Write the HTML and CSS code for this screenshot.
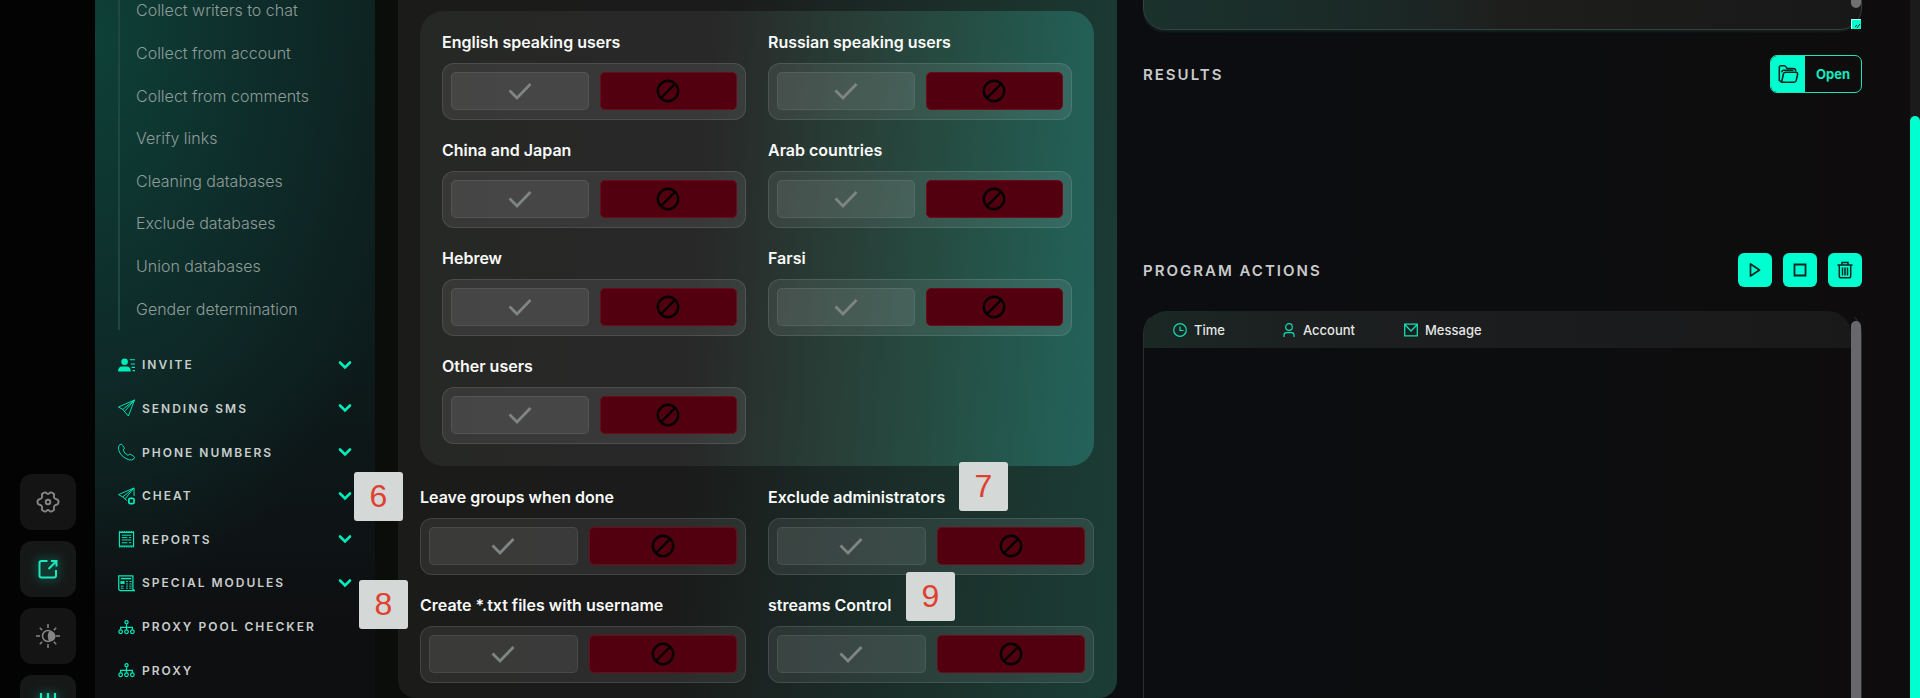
FILE: index.html
```html
<!DOCTYPE html>
<html lang="en">
<head>
<meta charset="utf-8">
<title>Collect</title>
<link rel="stylesheet" href="styles.css">
</head>
<body>
<svg class="defs" aria-hidden="true">
  <symbol id="check" viewBox="0 0 24 24"><path d="M1.500 11.500 9 19 22.500 5" fill="none" stroke="currentColor" stroke-width="2.800"/></symbol>
  <symbol id="ban" viewBox="0 0 24 24"><circle cx="12" cy="12" r="10.200" fill="none" stroke="currentColor" stroke-width="2.400"/><path d="M5 19 19 5" stroke="currentColor" stroke-width="2.400"/></symbol>
  <symbol id="chev" viewBox="0 0 14 14"><path d="M2 4.500 7 9.500 12 4.500" fill="none" stroke="currentColor" stroke-width="2.600" stroke-linecap="round"/></symbol>
  <symbol id="tree" viewBox="0 0 18 18"><g fill="none" stroke="currentColor" stroke-width="1.300"><circle cx="9" cy="4" r="1.700"/><circle cx="2.800" cy="14" r="1.900"/><circle cx="9" cy="14" r="1.900"/><circle cx="15.200" cy="14" r="1.900"/><path d="M9 6v6M2.800 12V9.500h12.400V12"/></g></symbol>
</svg>
<div class="app">
  <aside class="rail">
    <button class="tool" aria-label="Settings"><svg viewBox="0 0 24 24"><g fill="none" stroke="currentColor" stroke-width="1.900" stroke-linejoin="round"><path d="M9.300 2.600Q10 2.300 10.500 3.200 12 4.800 13.500 3.200 14 2.200 15.500 2.500L17.500 3.600Q18.500 4.300 18 5.500C17.600 7.500 18.500 8.900 20.500 9.200Q22.500 9.600 22.500 12T20.500 14.800C18.500 15.100 17.600 16.500 18 18.500Q18.500 19.700 17.500 20.400L15.500 21.500C14.500 21.800 14 21.500 13.500 20.800Q12 19.200 10.500 20.800C10 21.500 9.500 21.800 8.500 21.500L6.500 20.400Q5.500 19.700 6 18.500C6.400 16.500 5.500 15.100 3.500 14.800Q1.500 14.400 1.500 12T3.500 9.200C5.500 8.900 6.400 7.500 6 5.500Q5.500 4.300 6.500 3.600L8.500 2.500Z"/><circle cx="12" cy="12" r="2.300"/></g></svg></button>
    <button class="tool on" aria-label="Export"><svg viewBox="0 0 24 24"><path d="M11.500 4H5.500Q3.500 4 3.500 6V18.500Q3.500 20.500 5.500 20.500H18Q20 20.500 20 18.500V13M15 4h5.500v5.500M20 4.500 12.500 12" fill="none" stroke="currentColor" stroke-width="2"/></svg></button>
    <button class="tool" aria-label="Brightness"><svg viewBox="0 0 24 24"><g fill="none" stroke="currentColor" stroke-width="1.500"><circle cx="12" cy="12" r="5.500"/><path d="M12 0v4M12 20v4M0 12h4M20 12h4M3.800 3.800l2.400 2.400M17.800 17.800l2.400 2.400M3.800 20.200l2.400-2.400M17.800 6.200l2.400-2.400"/></g><path d="M13 7.500a5 5 0 1 1 0 9.500Q10.500 12 13 7.500z" fill="currentColor"/></svg></button>
    <button class="tool on" aria-label="Filters"><svg viewBox="0 0 24 24"><path d="M5 2v20M19 2v20M12 2v5M12 7Q8 10 8 16M12 7Q16 10 16 16" fill="none" stroke="currentColor" stroke-width="2.200"/></svg></button>
  </aside>

  <nav class="side">
    <div class="sub">
      <a href="#">Collect writers to chat</a>
      <a href="#">Collect from account</a>
      <a href="#">Collect from comments</a>
      <a href="#">Verify links</a>
      <a href="#">Cleaning databases</a>
      <a href="#">Exclude databases</a>
      <a href="#">Union databases</a>
      <a href="#">Gender determination</a>
    </div>
    <div class="menu">
      <a href="#"><svg viewBox="0 0 18 18"><circle cx="7" cy="5.500" r="3.500" fill="currentColor"/><path d="M0 16q0-5.500 4.500-5.500h4.500q4.500 0 4.500 5.500z" fill="currentColor"/><path d="M12.500 3.500H18M13.500 8H18M14.500 11.500H18M15.500 15H18" stroke="currentColor" stroke-width="1.200"/></svg><span>INVITE</span><svg class="chev"><use href="#chev"/></svg></a>
      <a href="#"><svg viewBox="0 0 18 18"><path d="M17.500.500.500 8 5 10.500 11 17.500ZM17.500.500 5 10.500M17.500.500 7.500 12" fill="none" stroke="currentColor"/></svg><span>SENDING SMS</span><svg class="chev"><use href="#chev"/></svg></a>
      <a href="#"><svg viewBox="0 0 18 18"><path d="M1.500 1.500Q3.500-.500 5 2L6.500 4.500Q7 5.500 5.500 7 6.500 10.500 10.500 12.500 12 11 13.500 11.500L16.500 13.500Q18.500 15 16.500 16.500 14.500 18 11.500 17.300 2.500 14 .600 6.500.200 3 1.500 1.500Z" fill="none" stroke="currentColor"/></svg><span>PHONE NUMBERS</span><svg class="chev"><use href="#chev"/></svg></a>
      <a href="#"><svg viewBox="0 0 18 18"><path d="M17 9V.500L.500 7.500 5 10 9.500 14M17 .500 5 10M17 .500 7.500 12" fill="none" stroke="currentColor"/><rect x="11.500" y="11.500" width="5.500" height="5.500" rx="1.500" fill="none" stroke="currentColor" stroke-width="1.800"/></svg><span>CHEAT</span><svg class="chev"><use href="#chev"/></svg></a>
      <a href="#"><svg viewBox="0 0 18 18"><path d="M1.500 2h15v14.500h-15z" fill="none" stroke="currentColor" stroke-width="1.200"/><path d="M1 1h16M1 17.500h16" stroke="currentColor" stroke-dasharray="1.500 1"/><path d="M4 5h10M4 7.500h6M11.500 7.500H14M4 10h10M4 13h6M11.500 13H14" stroke="currentColor"/></svg><span>REPORTS</span><svg class="chev"><use href="#chev"/></svg></a>
      <a href="#"><svg viewBox="0 0 18 18"><path d="M.800 1.500h15v14.500l1.700 1H2.500Q.800 17 .800 15Z" fill="none" stroke="currentColor" stroke-width="1.300"/><path d="M3 4.300h11" stroke="currentColor" stroke-width="1.600"/><path d="M2.500 7h4.500v3h-4.500z" fill="currentColor"/><path d="M8.500 7.500h2M12 7.500h2.500M8.500 10h2M12 10h2.500M3 12.300h3M8.500 12.300h2M12 12.300h2.500M3 14.500h3M8.500 14.500h2M12 14.500h2.500" stroke="currentColor"/></svg><span>SPECIAL MODULES</span><svg class="chev"><use href="#chev"/></svg></a>
      <a href="#"><svg><use href="#tree"/></svg><span>PROXY POOL CHECKER</span></a>
      <a href="#"><svg><use href="#tree"/></svg><span>PROXY</span></a>
    </div>
  </nav>

  <main class="panel">
    <section class="card grid">
      <fieldset><legend>English speaking users</legend><div class="switch"><label class="yes"><input type="radio" name="en" aria-label="Yes"><svg><use href="#check"/></svg></label><label class="no"><input type="radio" name="en" aria-label="No" checked><svg><use href="#ban"/></svg></label></div></fieldset>
      <fieldset><legend>Russian speaking users</legend><div class="switch"><label class="yes"><input type="radio" name="ru" aria-label="Yes"><svg><use href="#check"/></svg></label><label class="no"><input type="radio" name="ru" aria-label="No" checked><svg><use href="#ban"/></svg></label></div></fieldset>
      <fieldset><legend>China and Japan</legend><div class="switch"><label class="yes"><input type="radio" name="cn" aria-label="Yes"><svg><use href="#check"/></svg></label><label class="no"><input type="radio" name="cn" aria-label="No" checked><svg><use href="#ban"/></svg></label></div></fieldset>
      <fieldset><legend>Arab countries</legend><div class="switch"><label class="yes"><input type="radio" name="ar" aria-label="Yes"><svg><use href="#check"/></svg></label><label class="no"><input type="radio" name="ar" aria-label="No" checked><svg><use href="#ban"/></svg></label></div></fieldset>
      <fieldset><legend>Hebrew</legend><div class="switch"><label class="yes"><input type="radio" name="he" aria-label="Yes"><svg><use href="#check"/></svg></label><label class="no"><input type="radio" name="he" aria-label="No" checked><svg><use href="#ban"/></svg></label></div></fieldset>
      <fieldset><legend>Farsi</legend><div class="switch"><label class="yes"><input type="radio" name="fa" aria-label="Yes"><svg><use href="#check"/></svg></label><label class="no"><input type="radio" name="fa" aria-label="No" checked><svg><use href="#ban"/></svg></label></div></fieldset>
      <fieldset><legend>Other users</legend><div class="switch"><label class="yes"><input type="radio" name="ot" aria-label="Yes"><svg><use href="#check"/></svg></label><label class="no"><input type="radio" name="ot" aria-label="No" checked><svg><use href="#ban"/></svg></label></div></fieldset>
    </section>
    <section class="extra grid">
      <fieldset><legend>Leave groups when done</legend><b class="pin p6">6</b><div class="switch"><label class="yes"><input type="radio" name="lv" aria-label="Yes"><svg><use href="#check"/></svg></label><label class="no"><input type="radio" name="lv" aria-label="No" checked><svg><use href="#ban"/></svg></label></div></fieldset>
      <fieldset><legend>Exclude administrators</legend><b class="pin p7">7</b><div class="switch"><label class="yes"><input type="radio" name="ex" aria-label="Yes"><svg><use href="#check"/></svg></label><label class="no"><input type="radio" name="ex" aria-label="No" checked><svg><use href="#ban"/></svg></label></div></fieldset>
      <fieldset><legend>Create *.txt files with username</legend><b class="pin p8">8</b><div class="switch"><label class="yes"><input type="radio" name="tx" aria-label="Yes"><svg><use href="#check"/></svg></label><label class="no"><input type="radio" name="tx" aria-label="No" checked><svg><use href="#ban"/></svg></label></div></fieldset>
      <fieldset><legend>streams Control</legend><b class="pin p9">9</b><div class="switch"><label class="yes"><input type="radio" name="st" aria-label="Yes"><svg><use href="#check"/></svg></label><label class="no"><input type="radio" name="st" aria-label="No" checked><svg><use href="#ban"/></svg></label></div></fieldset>
    </section>
  </main>

  <section class="out">
    <div class="box">
      <textarea aria-label="Links"></textarea>
      <i class="box-thumb"></i>
      <svg class="grip" viewBox="0 0 10 10"><path d="M0 0h10v10H0z" fill="#0fc"/><path d="M.500 10V.500H10" fill="none" stroke="#b9fff0"/><path d="M4 8l2-2M6 9l3-4" stroke="#033"/></svg>
    </div>
    <header class="results">
      <h2>RESULTS</h2>
      <button class="open"><span class="folder"><svg viewBox="0 0 24 24"><path d="M5 21 2.500 19V5Q2.500 3 4.500 3H8Q9 3 10 4.500L11 6H18Q20.500 6 20.500 9M5 21 7 12Q7.500 10 9.500 10H20.500Q22.500 10 22.500 12L21 19Q20.500 21 18.500 21ZM5 10Q6 7.500 8 8H18" fill="none" stroke="currentColor" stroke-width="1.700" stroke-linejoin="round"/></svg></span><span class="txt">Open</span></button>
    </header>
    <header class="actions">
      <h2>PROGRAM ACTIONS</h2>
      <button aria-label="Start"><svg viewBox="0 0 18 18"><path d="M4.500 3v12L13.500 9Z" fill="none" stroke="currentColor" stroke-width="1.700" stroke-linejoin="round"/></svg></button>
      <button aria-label="Stop"><svg viewBox="0 0 18 18"><path d="M3.500 3.500h11v11h-11z" fill="none" stroke="currentColor" stroke-width="1.800"/></svg></button>
      <button aria-label="Clear"><svg viewBox="0 0 18 18"><path d="M1.500 4h15M6 4V1.500h6V4M3.300 4v11q0 1.800 1.700 1.800h8q1.700 0 1.700-1.800V4M6.500 6.500v8M9 6.500v8M11.500 6.500v8" fill="none" stroke="currentColor" stroke-width="1.500"/></svg></button>
    </header>
    <div class="log">
      <div class="log-main">
        <table>
          <thead><tr>
            <th class="c1"><span><svg viewBox="0 0 14 14"><circle cx="7" cy="7" r="6.300" fill="none" stroke="currentColor" stroke-width="1.200"/><path d="M7 3.500V7.500H10.500" fill="none" stroke="currentColor" stroke-width="1.200"/></svg>Time</span></th>
            <th class="c2"><span><svg viewBox="0 0 14 14"><circle cx="7" cy="4" r="3.300" fill="none" stroke="currentColor" stroke-width="1.200"/><path d="M2 14V12Q2 9.700 4.500 9.700h5Q12 9.700 12 12v2" fill="none" stroke="currentColor" stroke-width="1.200"/></svg>Account</span></th>
            <th class="c3"><span><svg viewBox="0 0 14 14"><path d="M.700 1.200h12.600v11.600H.700zM.700 1.500 7 8l6.300-6.500" fill="none" stroke="currentColor" stroke-width="1.300"/></svg>Message</span></th>
          </tr></thead>
        </table>
      </div>
      <i class="log-thumb"></i>
    </div>
  </section>
  <div class="scroll"><i></i></div>
</div>
</body>
</html>
```
FILE: styles.css
```css
* { box-sizing: border-box; }
body { margin: 0; background: #0c0d0e; color: #f8faf9; font-family: Inter, "Open Sans", sans-serif; }
a { color: inherit; text-decoration: none; }
button { font: inherit; padding: 0; border: 0; cursor: pointer; }
h2 { margin: 0; }
.defs { position: absolute; width: 0; height: 0; }

.app {
  display: grid;
  grid-template-columns: 95px 280px minmax(0, 742fr) minmax(0, 793fr) 10px;
  grid-template-rows: 100vh;
  height: 100vh;
  overflow: hidden;
  background: linear-gradient(90deg, #0b0d0a, #0b0d0a 30%, #0b0d10 60%, #0d0d0e 90%, #0f0c0d);
}

/* Icon rail */
.rail { display: flex; flex-direction: column; align-items: flex-start; gap: 11px; padding: 474px 0 0 20px; background: #030303; }
.tool { flex: none; display: grid; place-items: center; width: 56px; height: 56px; border-radius: 12px; background: #141414; color: #858585; }
.tool svg { width: 24px; height: 24px; }
.tool.on { color: #1fe8bd; background: radial-gradient(#14201d 10%, #161818 60%); }
.tool.on svg { filter: drop-shadow(0 0 5px #00ffcc88); }

/* Sidebar */
.side {
  padding: 0 23px;
  background: radial-gradient(ellipse 330px 560px at 0 40px, #0e4038, #0e2d2a 50%, #10201f00 100%),
    linear-gradient(#0d1f1e, #0d1b1b 50%, #0e0f11 90%);
}
.sub {
  display: grid; grid-auto-rows: 1fr; align-items: center;
  height: 341px; margin-top: -11px; padding-left: 16px;
  border-left: 2px solid #1e4842;
  font-size: 16px; font-weight: 300; line-height: 20px; color: #8e9c99;
}
.menu { display: grid; grid-auto-rows: 1fr; height: 349px; margin-top: 13px; }
.menu a { display: flex; align-items: center; gap: 7px; color: #00ecbc; }
.menu svg { flex: none; width: 17px; height: 18px; }
.menu span { flex: 1; color: #c8cecc; font-size: 12px; font-weight: 600; letter-spacing: 2px; white-space: nowrap; }
.menu .chev { width: 14px; height: 14px; }

/* Settings panel */
.panel {
  margin-left: 23px;
  padding: 11px 23px 15px 22px;
  border-radius: 0 0 18px 18px;
  background: linear-gradient(95deg, #1b1c1a 0, #1a1b1a 42%, #1b2825 60%, #1b352f 85%, #1b3d36);
}
.grid { display: grid; grid-template-columns: 1fr 1fr; column-gap: 22px; }
.card {
  row-gap: 18px; padding: 19px 22px 22px; border-radius: 24px;
  background: linear-gradient(94deg, #262825, #282828 42%, #283c35 60%, #255045 80%, #235c53 92%, #24625a);
}
.extra { row-gap: 18px; padding-top: 19px; }
fieldset { position: relative; min-width: 0; margin: 0; padding: 0; border: 0; }
legend { padding: 0; font-size: 16px; font-weight: 600; line-height: 24px; white-space: nowrap; }
.switch {
  display: grid; grid-template-columns: 1fr 1fr; gap: 11px;
  height: 57px; margin-top: 9px; padding: 8px;
  border: 1px solid #ffffff1c; border-radius: 12px; background: #ffffff14;
}
.switch label { position: relative; display: grid; place-items: center; height: 38px; border-radius: 5px; }
.switch input { position: absolute; inset: 0; margin: 0; opacity: 0; }
.switch svg { width: 24px; height: 24px; }
.yes { border: 1px solid #ffffff14; background: #ffffff12; color: #7f8583; }
.no { border: 1px solid #6d0a1c; background: #520010; color: #050002; }

/* Numbered callouts */
.pin {
  position: absolute; z-index: 2; display: grid; place-items: center;
  width: 49px; height: 49px; border-radius: 3px; background: #d4d8d6;
  color: #e0402f; font: 400 32px "Liberation Sans", sans-serif;
}
.p6 { left: -66px; top: -37px; }
.p7 { left: 191px; top: -47px; }
.p8 { left: -61px; top: -37px; }
.p9 { left: 138px; top: -45px; }

/* Output column */
.out { display: flex; flex-direction: column; min-width: 0; padding: 0 48px 0 26px; }
.box { position: relative; flex: none; height: 150px; margin-top: -120px; }
.box textarea {
  display: block; width: 100%; height: 150px; resize: none;
  border: 1px solid #37413e; border-radius: 22px; outline: 0;
  background: linear-gradient(90deg, #1a312c, #1b2826 35%, #1e1f1d 50%, #171817);
  box-shadow: -1px 3px 2px -1px #14332d88;
}
.box-thumb { position: absolute; right: 1px; bottom: 22px; width: 10px; height: 80px; border-radius: 5px; background: #707070; }
.grip { position: absolute; right: 1px; bottom: 1px; width: 10px; height: 10px; }
h2 { flex: 1; color: #c9cacb; font-size: 15px; font-weight: 600; letter-spacing: 2px; }
.results, .actions { flex: none; display: flex; align-items: center; gap: 11px; }
.results { margin-top: 25px; height: 38px; }
.open { display: flex; width: 92px; height: 38px; overflow: hidden; border: 1px solid #1fe3bd; border-radius: 7px; background: transparent; color: #10eac0; }
.folder { display: grid; place-items: center; width: 34px; height: 36px; background: #00ffd0; color: #06251f; }
.folder svg { width: 22px; height: 22px; }
.txt { flex: 1; font-size: 13px; font-weight: 700; line-height: 36px; text-align: center; }
.actions { height: 34px; margin-top: 160px; }
.actions button { display: grid; place-items: center; width: 34px; height: 34px; border-radius: 6px; background: #00ffd0; color: #06251f; }
.actions svg { width: 18px; height: 18px; }
.log { position: relative; flex: 1; margin-top: 23px; border: 1px solid #2c2f2f; border-bottom: 0; border-top-color: transparent; border-radius: 24px 24px 0 0; }
.log-main { margin-right: 10px; overflow: hidden; border-radius: 23px 23px 0 0; }
table { width: 100%; border-collapse: collapse; table-layout: fixed; background: linear-gradient(90deg, #1a2824, #1c2020 20%, #1c1d1e 45%, #19191a); }
th { height: 37px; padding: 0; color: #e4e7e6; font-size: 13px; font-weight: 500; text-align: left; }
th span { display: flex; align-items: center; gap: 7px; }
th svg { width: 14px; height: 14px; color: #12dfb4; }
.c1 { width: 138px; padding-left: 29px; }
.c2 { width: 122px; }
.log-thumb { position: absolute; right: 0; top: 10px; bottom: 0; width: 10px; border-radius: 5px 5px 0 0; background: #68686a; }

/* Page scrollbar */
.scroll { padding-top: 116px; background: #1b1b1b; }
.scroll i { display: block; height: 100%; border-radius: 5px 5px 0 0; background: #00ffd0; }
```
